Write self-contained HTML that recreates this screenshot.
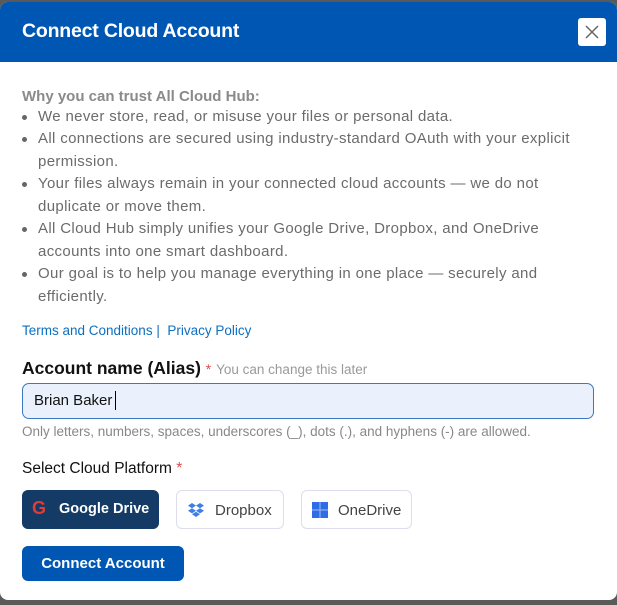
<!DOCTYPE html>
<html><head><meta charset="utf-8"><style>
*{margin:0;padding:0;box-sizing:border-box}
html,body{width:617px;height:605px;overflow:hidden;background:#5a5a5a;font-family:"Liberation Sans",sans-serif}
.m{position:absolute;left:0;top:2px;width:617px;height:598px;background:#fff;border-radius:8px;overflow:hidden}
.h{position:absolute;left:0;top:0;width:617px;height:60px;background:#0057b3}
.h h1{position:absolute;left:22px;top:18px;color:#fff;font-size:19.5px;font-weight:bold;letter-spacing:-0.2px}
.x{position:absolute;left:578px;top:16px;width:28px;height:28px;background:#fff;border-radius:3px}
.t{position:absolute;color:#6b6b6b;font-size:15px;letter-spacing:0.35px;white-space:nowrap}
.b{position:absolute;left:22px;width:5px;height:5px;border-radius:50%;background:#666}
</style></head><body>
<div class="m">
<div class="h"><h1>Connect Cloud Account</h1>
<div class="x"><svg width="28" height="28"><path d="M8 8L20 20M20 8L8 20" stroke="#666" stroke-width="1.5"/></svg></div></div>
<div class="t" style="left:22px;top:86px;font-weight:bold;color:#8a8a8a;letter-spacing:0">Why you can trust All Cloud Hub:</div>
<div class="b" style="top:113px"></div><div class="t" style="left:38px;top:106px">We never store, read, or misuse your files or personal data.</div>
<div class="b" style="top:135px"></div><div class="t" style="left:38px;top:128px">All connections are secured using industry-standard OAuth with your explicit</div>
<div class="t" style="left:38px;top:151px">permission.</div>
<div class="b" style="top:180px"></div><div class="t" style="left:38px;top:173px">Your files always remain in your connected cloud accounts — we do not</div>
<div class="t" style="left:38px;top:196px">duplicate or move them.</div>
<div class="b" style="top:225px"></div><div class="t" style="left:38px;top:218px">All Cloud Hub simply unifies your Google Drive, Dropbox, and OneDrive</div>
<div class="t" style="left:38px;top:241px">accounts into one smart dashboard.</div>
<div class="b" style="top:270px"></div><div class="t" style="left:38px;top:263px">Our goal is to help you manage everything in one place — securely and</div>
<div class="t" style="left:38px;top:286px">efficiently.</div>
<div class="t" style="left:22px;top:321px;font-size:13.5px;color:#0b6fc1;letter-spacing:0">Terms and Conditions | &nbsp;Privacy Policy</div>
<div class="t" style="left:22px;top:356px;font-size:17.5px;font-weight:bold;color:#111;letter-spacing:0">Account name (Alias) <span style="color:#e24b4b;font-weight:normal;font-size:14px">*</span> <span style="font-size:13.5px;font-weight:normal;color:#999">You can change this later</span></div>
<div style="position:absolute;left:22px;top:381px;width:572px;height:36px;background:#eaf1fd;border:1.5px solid #3a78c2;border-radius:7px"><span style="position:absolute;left:11px;top:8px;font-size:15px;color:#111">Brian Baker</span><span style="position:absolute;left:92px;top:7px;width:1px;height:19px;background:#000"></span></div>
<div class="t" style="left:22px;top:422px;font-size:13.5px;color:#888;letter-spacing:0">Only letters, numbers, spaces, underscores (_), dots (.), and hyphens (-) are allowed.</div>
<div class="t" style="left:22px;top:458px;font-size:15.5px;color:#111;letter-spacing:0">Select Cloud Platform <span style="color:#e24b4b">*</span></div>
<div style="position:absolute;left:22px;top:488px;width:137px;height:39px;background:#133b66;border-radius:6px"><span style="position:absolute;left:10px;top:8px;color:#e53935;font-weight:bold;font-size:18px">G</span><span style="position:absolute;left:37px;top:11px;color:#fff;font-weight:bold;font-size:14.5px">Google Drive</span></div>
<div style="position:absolute;left:176px;top:488px;width:108px;height:39px;border:1px solid #dde;border-radius:6px"><svg style="position:absolute;left:11px;top:12px" width="16" height="14" viewBox="0 0 16 14" fill="#3d7ee8"><path d="M4 0L0 2.6 4 5.2 8 2.6zM12 0L8 2.6 12 5.2 16 2.6zM0 7.8L4 10.4 8 7.8 4 5.2zM12 5.2L8 7.8 12 10.4 16 7.8zM4 11.3L8 14 12 11.3 8 8.7z"/></svg><span style="position:absolute;left:38px;top:11px;color:#444;font-size:15px">Dropbox</span></div>
<div style="position:absolute;left:301px;top:488px;width:111px;height:39px;border:1px solid #dde;border-radius:6px"><svg style="position:absolute;left:10px;top:11px" width="16" height="16"><rect width="16" height="16" fill="#2f6de6"/><path d="M8 0V16M0 8H16" stroke="#9fbdf5" stroke-width="1"/></svg><span style="position:absolute;left:36px;top:11px;color:#444;font-size:15px">OneDrive</span></div>
<div style="position:absolute;left:22px;top:544px;width:162px;height:35px;background:#0057b3;border-radius:6px;color:#fff;font-weight:bold;font-size:15px;text-align:center;line-height:35px">Connect Account</div>
</div>
</body></html>
